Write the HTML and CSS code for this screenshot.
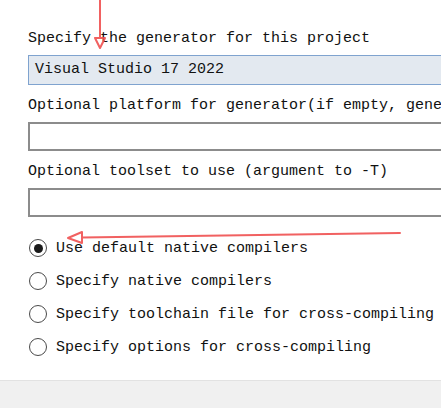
FILE: index.html
```html
<!DOCTYPE html>
<html>
<head>
<meta charset="utf-8">
<link rel="stylesheet" href="styles.css">
</head>
<body>
<div class="page">
  <div class="content">
    <div class="label first">Specify the generator for this project</div>
    <div class="combo">Visual Studio 17 2022</div>
    <div class="label">Optional platform for generator(if empty, generator uses default)</div>
    <div class="input"></div>
    <div class="label">Optional toolset to use (argument to -T)</div>
    <div class="input"></div>
    <div class="radios">
      <div class="radio-row"><span class="radio checked"></span><span>Use default native compilers</span></div>
      <div class="radio-row"><span class="radio"></span><span>Specify native compilers</span></div>
      <div class="radio-row"><span class="radio"></span><span>Specify toolchain file for cross-compiling</span></div>
      <div class="radio-row"><span class="radio"></span><span>Specify options for cross-compiling</span></div>
    </div>
  </div>
  <div class="footer"></div>
  <svg class="annot" width="441" height="408" viewBox="0 0 441 408">
    <g fill="none" stroke="#f05050" stroke-width="2" stroke-linejoin="round" stroke-linecap="round" opacity="0.9">
      <line x1="100" y1="0" x2="100" y2="38"/>
      <polygon points="95,38 105,38 100,48"/>
      <line x1="82" y1="237.5" x2="400" y2="233"/>
      <polygon points="82,232 82,243 68,238"/>
    </g>
  </svg>
</div>
</body>
</html>
```

FILE: styles.css
```css
html, body {
  margin: 0;
  padding: 0;
  background: #ffffff;
}
.page {
  position: relative;
  width: 441px;
  height: 408px;
  overflow: hidden;
  display: flex;
  flex-direction: column;
  font-family: "Liberation Mono", "DejaVu Sans Mono", monospace;
  font-size: 15px;
  color: #111;
}
.content {
  flex: 1;
  padding-left: 28px;
  display: flex;
  flex-direction: column;
}
.label {
  height: 18px;
  line-height: 18px;
  white-space: nowrap;
  margin-top: 12px;
  margin-bottom: 7px;
}
.label.first {
  margin-top: 30px;
}
.combo {
  box-sizing: border-box;
  width: 440px;
  height: 30px;
  border: 1px solid #7fa3cf;
  background: #e3e9f0;
  line-height: 28px;
  padding-left: 6px;
  white-space: nowrap;
}
.input {
  box-sizing: border-box;
  width: 440px;
  height: 29px;
  border: 2px solid #8c8c8c;
  background: #fff;
}
.radios {
  display: flex;
  flex-direction: column;
  gap: 11px;
  margin-top: 20px;
}
.radio-row {
  display: flex;
  align-items: center;
  height: 22px;
  gap: 9px;
  white-space: nowrap;
}
.radio {
  box-sizing: border-box;
  width: 18px;
  height: 18px;
  border-radius: 50%;
  border: 1.5px solid #4a4a4a;
  background: #fff;
  margin-left: 1px;
  display: flex;
  align-items: center;
  justify-content: center;
}
.radio.checked::after {
  content: "";
  width: 9px;
  height: 9px;
  border-radius: 50%;
  background: #1a1a1a;
}
.footer {
  height: 27px;
  border-top: 1px solid #e2e2e2;
  background: #f0f0f0;
}
.annot {
  position: absolute;
  left: 0;
  top: 0;
  pointer-events: none;
}
```
